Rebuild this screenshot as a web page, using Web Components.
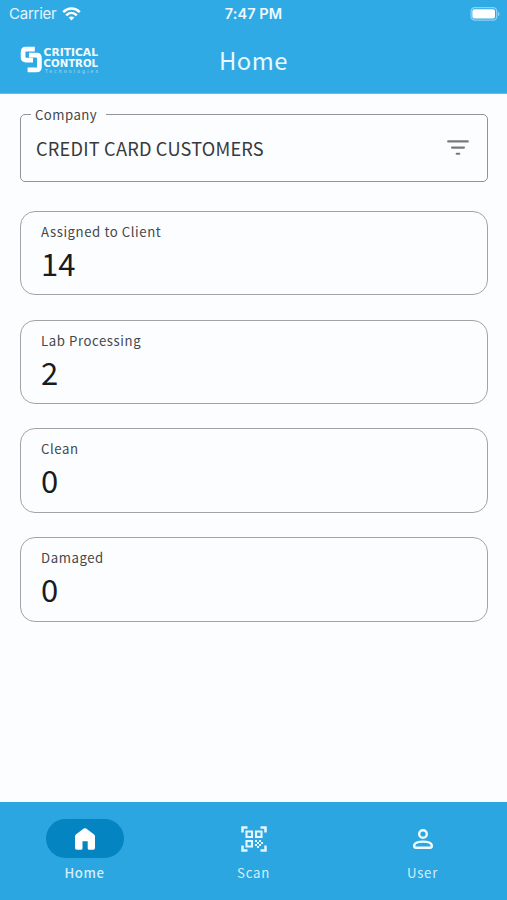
<!DOCTYPE html>
<html lang="en">
<head>
<meta charset="utf-8">
<title>Home</title>
<style>
html,body{margin:0;height:100%}
body{background:#fcfdff;font-family:"Noto Sans CJK SC","Noto Sans",sans-serif;overflow:hidden}
</style>
</head>
<body>
<home-screen></home-screen>
<script>
const define = (name, html) => customElements.define(name, class extends HTMLElement {
  constructor() {
    super();
    const t = document.createElement('template');
    t.innerHTML = html;
    this.attachShadow({mode: 'open'}).append(t.content.cloneNode(true));
  }
});

define('status-bar', `
<style>
:host{display:grid;grid-template-columns:1fr auto 1fr;height:28px;align-items:center;color:#fff;font:15px/28px Inter,sans-serif}
.left{display:flex;align-items:center;gap:5.7px;padding-left:9px;color:#e2f4ff}
.carrier{letter-spacing:-.25px}
.time{font-size:14.5px;font-weight:600;color:#eefaff;letter-spacing:.1px}
.right{display:flex;justify-content:flex-end;padding-right:6px}
svg{display:block}
.left svg{margin-top:-1px}
.right svg{margin-top:-1px}
</style>
<div class="left"><span class="carrier">Carrier</span>
<svg width="19" height="14" viewBox="0 0 19 14" fill="none" stroke="#fff" stroke-width="2.5"><path d="M1.2 5.1C6 .3 13 .3 17.8 5.1"/><path d="M4.2 8.3c3.1-3 7.5-3 10.6 0"/><path d="M9.5 13.4 6.7 10.6c1.6-1.5 4-1.5 5.6 0z" fill="#fff" stroke="none"/></svg></div>
<span class="time">7:47 PM</span>
<div class="right"><svg width="31" height="14" viewBox="0 0 31 14"><rect x="1.1" y=".7" width="25.6" height="12.4" rx="3.6" fill="none" stroke="#8dd0f3" stroke-width="1.3"/><rect x="2.4" y="2.3" width="22.6" height="9.2" rx="2" fill="#fff"/><path d="M28 4.8c2.1.8 2.1 3.6 0 4.4z" fill="#8dd0f3"/></svg></div>`);

define('brand-logo', `
<style>:host{display:block;width:80px;height:30px}svg{display:block}text{font-family:"DejaVu Sans",sans-serif;fill:#f4fcff}</style>
<svg width="80" height="30" viewBox="0 0 80 30">
<g fill="none" stroke="#fff" stroke-width="4.7">
<path d="M14.8 3.2H6Q3.1 3.2 3.1 6V11.3Q3.1 14.1 6 14.1H13"/>
<path d="M7.6 23.9H16.5Q19.4 23.9 19.4 21.2V12Q19.4 9.2 16.5 9.2H9"/></g>
<text x="23.6" y="10" font-size="9.6" font-weight="700" textLength="54.4" lengthAdjust="spacingAndGlyphs">CRITICAL</text>
<text x="23.6" y="20.6" font-size="9.6" font-weight="700" textLength="54.4" lengthAdjust="spacingAndGlyphs">CONTROL</text>
<text x="25" y="26.5" font-size="4.8" fill-opacity=".65" textLength="53" lengthAdjust="spacing">Technologies</text>
</svg>`);

define('app-bar', `
<style>
:host{display:grid;grid-template-columns:1fr auto 1fr;align-items:center;height:65px;padding:0 20px;box-sizing:border-box}
h1{margin:-2px 0 0;font-size:23.8px;line-height:36px;font-weight:400;letter-spacing:.5px;color:#e9f8ff}
</style>
<slot name="logo"></slot><h1><slot></slot></h1>`);

define('company-field', `
<style>
:host{display:block;height:76px}
fieldset{box-sizing:border-box;height:76px;margin:0;padding:0 18px 0 15px;border:1.4px solid #929396;border-radius:5px;min-width:0}
legend{font-size:13.2px;line-height:17px;letter-spacing:.45px;color:#46484b;padding:0 9px 0 4px;margin-left:-5px}
.row{display:flex;justify-content:space-between;align-items:center;height:50px}
.value{font-size:18.2px;line-height:30px;letter-spacing:.2px;color:#37393c}
svg{display:block}
</style>
<fieldset><legend><slot name="label"></slot></legend>
<div class="row"><span class="value"><slot></slot></span>
<svg width="22" height="18" viewBox="0 0 22 18" stroke="#77787b" stroke-width="2.1" stroke-linecap="round"><path d="M1.2 2.4H20.8M5 8.6H17M9.7 14.7H12.3"/></svg></div></fieldset>`);

define('stat-card', `
<style>
:host{display:flex;flex-direction:column;box-sizing:border-box;height:84.5px;border:1px solid #a2a3a6;border-radius:15px;padding:9px 20px 0}
.label{font-size:13.2px;line-height:22px;letter-spacing:.57px;color:#46484b}
.value{font-size:31px;line-height:40px;color:#191b1e}
</style>
<span class="label"><slot name="label"></slot></span><span class="value"><slot></slot></span>`);

define('nav-item', `
<style>
:host{display:flex;flex-direction:column;align-items:center;padding-top:17px}
.pill{display:flex;align-items:center;justify-content:center;width:78px;height:39px;border-radius:20px}
:host([active]) .pill{background:#0485c2}
.label{font-size:13.2px;line-height:20px;margin-top:5px;letter-spacing:.75px;color:#d3effc}
:host([active]) .label{font-weight:500;letter-spacing:.55px}
</style>
<div class="pill"><slot name="icon"></slot></div><span class="label"><slot></slot></span>`);

define('home-screen', `
<style>
:host{display:flex;flex-direction:column;width:507px;height:900px}
header{background:#2faae4;height:94px;box-sizing:border-box;border-bottom:1px solid #65bfeb}
main{flex:1;display:flex;flex-direction:column;padding:0 19px 0 20px}
company-field{margin-top:12px}
.cards{display:flex;flex-direction:column;gap:24.3px;margin-top:28.8px}
nav{display:grid;grid-template-columns:repeat(3,1fr);height:98px;background:#2ba6e0}
svg{display:block}
</style>
<header><status-bar></status-bar><app-bar><brand-logo slot="logo"></brand-logo>Home</app-bar></header>
<main>
<company-field><span slot="label">Company</span>CREDIT CARD CUSTOMERS</company-field>
<div class="cards">
<stat-card><span slot="label">Assigned to Client</span>14</stat-card>
<stat-card><span slot="label">Lab Processing</span>2</stat-card>
<stat-card><span slot="label">Clean</span>0</stat-card>
<stat-card><span slot="label">Damaged</span>0</stat-card>
</div>
</main>
<nav>
<nav-item active><svg slot="icon" width="20" height="22" viewBox="0 0 20 22"><path d="M1.2 6.3 8.8.6Q10 0 11.2.6L18.8 6.3Q20 7.2 20 8.4V20Q20 21.8 18.3 21.8H14.2Q12.7 21.8 12.7 20.3V13.2H7.5V20.3Q7.5 21.8 6 21.8H1.7Q0 21.8 0 20V8.4Q0 7.2 1.2 6.3Z" fill="#fff"/></svg>Home</nav-item>
<nav-item><svg slot="icon" width="26" height="26" viewBox="0 0 26 26" fill="none" stroke="#e3f6ff" stroke-width="2.1"><path stroke-width="2.5" d="M1.5 6.5V1.5H6.5M19.5 1.5H24.5V6.5M24.5 19.5V24.5H19.5M6.5 24.5H1.5V19.5"/><path d="M5.5 5.5H11V11H5.5ZM15 5.5H20.5V11H15ZM5.5 15H11V20.5H5.5Z"/><path d="M14 14h2v2h-2zM18 14h2v2h-2zM16 16h2v2h-2zM20 16h2v2h-2zM14 18h2v2h-2zM18 18h2v2h-2zM16 20h2v2h-2z" fill="#e3f6ff" stroke="none"/></svg>Scan</nav-item>
<nav-item><svg slot="icon" width="20" height="20" viewBox="0 0 20 20" fill="none" stroke="#f0fbff" stroke-width="2.4"><circle cx="10" cy="5" r="3.8"/><path d="M1.2 16.8C1.2 11.2 18.8 11.2 18.8 16.8V17Q18.8 18.8 17 18.8H3Q1.2 18.8 1.2 17Z"/></svg>User</nav-item>
</nav>`);
</script>
</body>
</html>
